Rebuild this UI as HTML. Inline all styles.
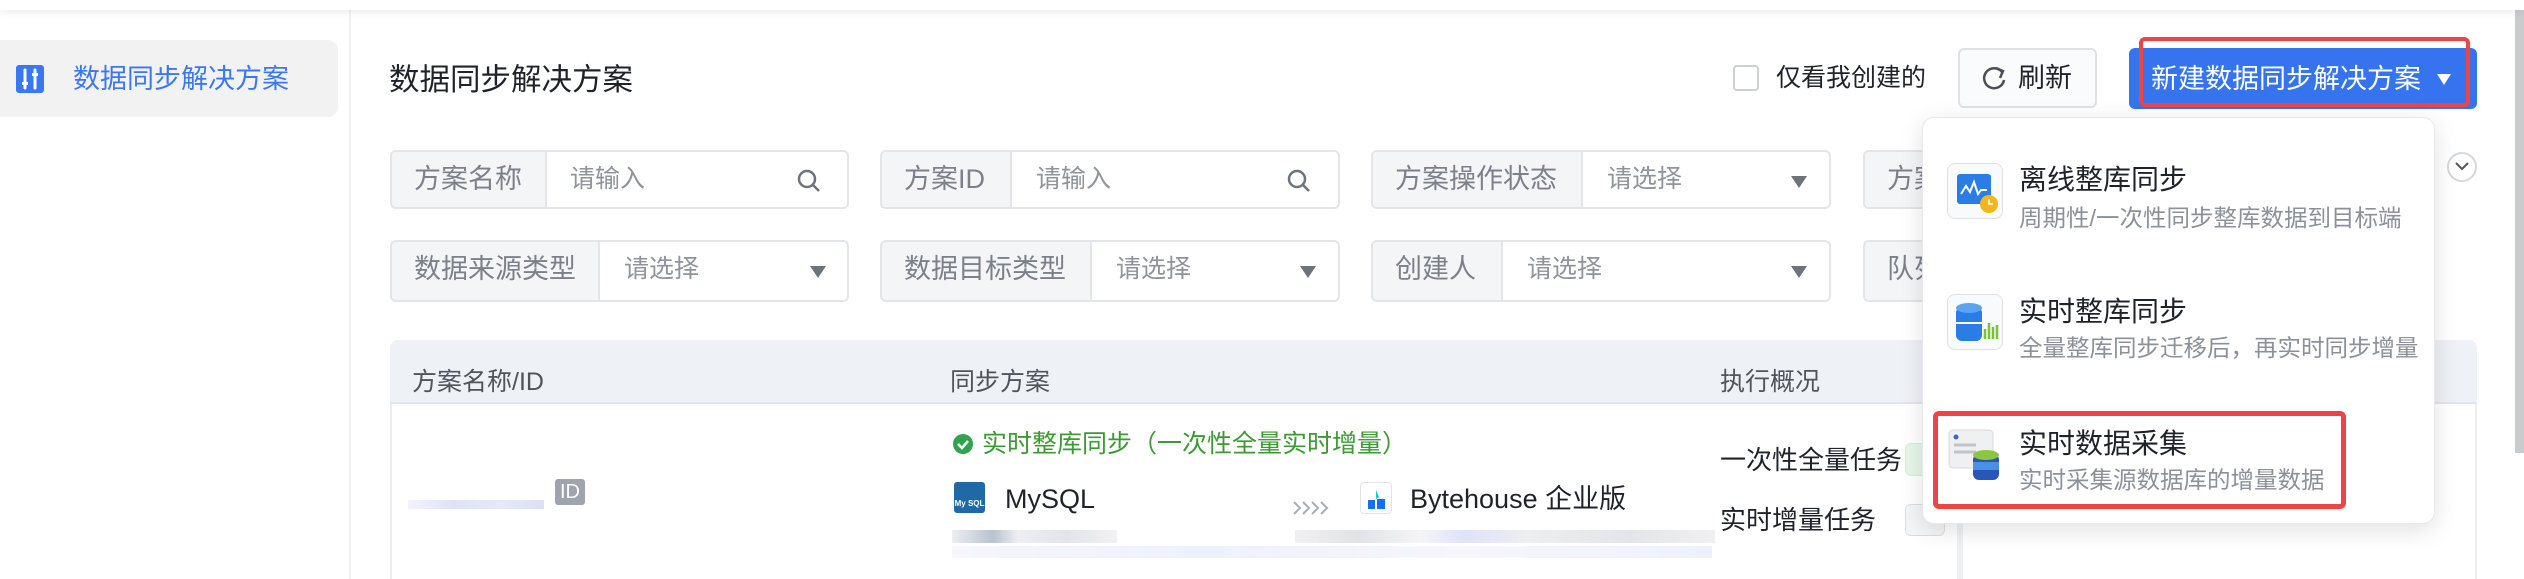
<!DOCTYPE html>
<html><head><meta charset="utf-8"><style>
*{box-sizing:border-box;margin:0;padding:0}
body{width:2524px;height:579px;overflow:hidden;background:#fff;font-family:"Liberation Sans","Noto Sans CJK SC",sans-serif;position:relative;color:#1f2329}
.a{position:absolute;white-space:nowrap}
.topbar{left:0;top:0;width:2524px;height:10px;background:#fff;box-shadow:0 2px 8px rgba(0,0,0,.08);z-index:2}
.side{left:0;top:10px;width:351px;height:569px;border-right:2px solid #eff0f2}
.f{position:absolute;height:59px;border:2px solid #e3e5e9;border-radius:6px;background:#fff;overflow:hidden}
.f .l{position:absolute;left:0;top:0;bottom:0;background:#f4f5f7;border-right:2px solid #e3e5e9;color:#7c8089;font-size:27px;line-height:55px;padding-left:22px}
.f .p{position:absolute;top:0;line-height:55px;font-size:25px;color:#8f939a}
.f .tri{position:absolute;top:24px;width:0;height:0;border-left:8px solid transparent;border-right:8px solid transparent;border-top:12px solid #6e737b}
.th{font-size:25px;color:#50545b;top:362px}
.dd{left:1922px;top:117px;width:513px;height:407px;background:#fff;border:1px solid #e8e9ec;border-radius:12px;box-shadow:0 6px 24px rgba(0,0,0,.12);z-index:5}
.ic{position:absolute;left:24px;width:56px;height:56px;border:1px solid #dfe1e5;border-radius:8px;background:#f9fafb}
.t1{position:absolute;left:96px;font-size:28px;color:#1f2329}
.t2{position:absolute;left:96px;font-size:23.5px;color:#8b9099}
</style></head><body>
<div class="a topbar"></div>
<div class="a side"></div>
<div class="a" style="left:0;top:40px;width:338px;height:77px;background:#f2f2f3;border-radius:0 10px 10px 0"></div>
<svg class="a" style="left:16px;top:65px" width="28" height="28" viewBox="0 0 28 28"><rect width="28" height="28" rx="3" fill="#3a78f2"/><path d="M9 5v18M19 5v18" stroke="#fff" stroke-width="3" stroke-linecap="round"/><rect x="6" y="17" width="6" height="3" fill="#fff"/><rect x="16" y="8" width="6" height="3" fill="#fff"/></svg>
<div class="a" style="left:73px;top:62px;font-size:27px;color:#3a78f2;line-height:34px">数据同步解决方案</div>
<div class="a" style="left:389px;top:61px;font-size:30.5px;color:#1f2329;line-height:38px">数据同步解决方案</div>

<div class="a" style="left:1733px;top:65px;width:26px;height:26px;border:2px solid #ccd0d6;border-radius:4px;background:#fff"></div>
<div class="a" style="left:1776px;top:62px;font-size:25px;line-height:32px;color:#1f2329">仅看我创建的</div>
<div class="a" style="left:1958px;top:48px;width:139px;height:60px;border:2px solid #dfe1e5;border-radius:6px;background:#fafbfc"></div>
<svg class="a" style="left:1980px;top:64px" width="28" height="30" viewBox="0 0 28 30"><path d="M22 8A10 10 0 1 0 24 16" fill="none" stroke="#4a4f57" stroke-width="2.5"/><path d="M16 4l7 3-3 7" fill="none" stroke="#4a4f57" stroke-width="2.5"/></svg>
<div class="a" style="left:2018px;top:61px;font-size:27px;line-height:34px;color:#1f2329">刷新</div>
<div class="a" style="left:2129px;top:48px;width:348px;height:61px;background:#3574ee;border-radius:6px"></div>
<div class="a" style="left:2151px;top:62px;font-size:27px;line-height:34px;color:#fff">新建数据同步解决方案</div>
<div class="a" style="left:2437px;top:74px;border-left:7px solid transparent;border-right:7px solid transparent;border-top:11px solid #fff"></div>
<div class="a" style="left:2139px;top:37px;width:331px;height:70px;border:4px solid #ee4444;border-radius:6px;z-index:3"></div>

<div class="f" style="left:390px;top:150px;width:459px"><div class="l" style="width:155px">方案名称</div><div class="p" style="left:178px">请输入</div>
<svg style="position:absolute;left:404px;top:16px" width="26" height="26" viewBox="0 0 26 26"><circle cx="11" cy="11" r="8" fill="none" stroke="#6e737b" stroke-width="2.5"/><path d="M17 17l6 6" stroke="#6e737b" stroke-width="2.5"/></svg></div>
<div class="f" style="left:880px;top:150px;width:460px"><div class="l" style="width:130px">方案ID</div><div class="p" style="left:154px">请输入</div>
<svg style="position:absolute;left:404px;top:16px" width="26" height="26" viewBox="0 0 26 26"><circle cx="11" cy="11" r="8" fill="none" stroke="#6e737b" stroke-width="2.5"/><path d="M17 17l6 6" stroke="#6e737b" stroke-width="2.5"/></svg></div>
<div class="f" style="left:1371px;top:150px;width:460px"><div class="l" style="width:210px">方案操作状态</div><div class="p" style="left:234px">请选择</div><div class="tri" style="left:418px"></div></div>
<div class="f" style="left:1863px;top:150px;width:460px"><div class="l" style="width:150px">方案状态</div></div>

<div class="f" style="left:390px;top:240px;width:459px;height:62px"><div class="l" style="width:208px">数据来源类型</div><div class="p" style="left:232px">请选择</div><div class="tri" style="left:418px"></div></div>
<div class="f" style="left:880px;top:240px;width:460px;height:62px"><div class="l" style="width:210px">数据目标类型</div><div class="p" style="left:234px">请选择</div><div class="tri" style="left:418px"></div></div>
<div class="f" style="left:1371px;top:240px;width:460px;height:62px"><div class="l" style="width:130px">创建人</div><div class="p" style="left:154px">请选择</div><div class="tri" style="left:418px"></div></div>
<div class="f" style="left:1863px;top:240px;width:460px;height:62px"><div class="l" style="width:150px">队列</div></div>
<div class="a" style="left:2447px;top:152px;width:30px;height:30px;border:2px solid #d6d8dc;border-radius:50%;background:#fff"></div>
<svg class="a" style="left:2454px;top:160px" width="16" height="12"><path d="M2 3l6 6 6-6" fill="none" stroke="#555" stroke-width="2"/></svg>

<div class="a" style="left:390px;top:340px;width:2087px;height:64px;background:#eef1f5;border-radius:8px 8px 0 0;border-bottom:2px solid #e3e6eb"></div>
<div class="a" style="left:390px;top:404px;width:2px;height:175px;background:#eceef1"></div>
<div class="a" style="left:2475px;top:404px;width:2px;height:175px;background:#eceef1"></div>
<div class="a th" style="left:412px">方案名称/ID</div>
<div class="a th" style="left:950px">同步方案</div>
<div class="a th" style="left:1720px">执行概况</div>
<div class="a" style="left:1957px;top:404px;width:6px;height:175px;background:#eef0f2"></div>

<div class="a" style="left:408px;top:500px;width:136px;height:9px;background:linear-gradient(90deg,#f2f3fb,#dfe2f7,#e6e8f8,#dde0f6)"></div>
<div class="a" style="left:555px;top:479px;width:30px;height:26px;background:#9ea3ae;border-radius:3px;color:#fff;font-size:20px;line-height:26px;text-align:center">ID</div>

<svg class="a" style="left:952px;top:433px" width="22" height="22"><circle cx="11" cy="11" r="10" fill="#2ea44f"/><path d="M6 11l4 4 6-7" fill="none" stroke="#fff" stroke-width="2.5"/></svg>
<div class="a" style="left:982px;top:428px;font-size:25px;line-height:32px;color:#3d9a33">实时整库同步（一次性全量实时增量）</div>
<div class="a" style="left:954px;top:482px;width:31px;height:31px;background:#1f6aa6;border-radius:3px;color:#fff;font-size:8px;line-height:44px;text-align:center;font-weight:bold">My SQL</div>
<div class="a" style="left:1005px;top:482px;font-size:27px;line-height:34px">MySQL</div>
<svg class="a" style="left:1292px;top:499px" width="40" height="18" viewBox="0 0 40 18"><path d="M2 3l6 6-6 6M11 3l6 6-6 6M20 3l6 6-6 6M29 3l6 6-6 6" fill="none" stroke="#a8adb4" stroke-width="2"/></svg>
<div class="a" style="left:1360px;top:482px;width:32px;height:32px;border:1px solid #e2e4e8;border-radius:4px;background:#fff"></div>
<svg class="a" style="left:1366px;top:488px" width="22" height="22"><path d="M10 2l3 7-3 2z" fill="#18c6d8"/><rect x="2" y="12" width="7" height="9" fill="#1670f5"/><rect x="11" y="11" width="8" height="10" fill="#1670f5"/></svg>
<div class="a" style="left:1410px;top:482px;font-size:27px;line-height:34px">Bytehouse 企业版</div>
<div class="a" style="left:952px;top:530px;width:165px;height:13px;background:linear-gradient(90deg,#eceef2,#b7c3cf 25%,#eeeff2 40%,#e3e4e8 70%,#f2f2f4)"></div>
<div class="a" style="left:1295px;top:530px;width:420px;height:13px;background:linear-gradient(90deg,#f0f0f2,#e2e3e6 15%,#f5f5f7 30%,#dfe3fa 40%,#eceef0 55%,#e4e5e8 80%,#f0f0f2)"></div>
<div class="a" style="left:952px;top:546px;width:760px;height:12px;background:linear-gradient(90deg,#f6f6fb,#eef0fb,#f7f7fa,#eef0fc)"></div>

<div class="a" style="left:1720px;top:443px;font-size:26px;line-height:34px">一次性全量任务</div>
<div class="a" style="left:1720px;top:503px;font-size:26px;line-height:34px">实时增量任务</div>
<div class="a" style="left:1905px;top:443px;width:40px;height:33px;background:#e5f6e8;border:1px solid #d4eed8;border-radius:6px"></div>
<div class="a" style="left:1905px;top:504px;width:40px;height:32px;background:#f4f5f7;border:1px solid #dcdee2;border-radius:6px"></div>

<div class="a" style="left:2515px;top:0;width:9px;height:453px;background:#c9cbcf"></div>

<div class="a dd">
 <div class="ic" style="top:45px"><svg width="56" height="56" viewBox="0 0 56 56"><rect x="9" y="10" width="34" height="30" rx="3" fill="#2a7de6"/><path d="M13 30l5-8 4 6 4-10 4 12 3-4h6" fill="none" stroke="#fff" stroke-width="2"/><circle cx="41" cy="40" r="9" fill="#f5b51c"/><path d="M41 35v5h4" stroke="#fff" stroke-width="1.6" fill="none"/></svg></div>
 <div class="t1" style="top:40px">离线整库同步</div>
 <div class="t2" style="top:81px">周期性/一次性同步整库数据到目标端</div>
 <div class="ic" style="top:176px"><svg width="56" height="56" viewBox="0 0 56 56"><rect x="8" y="12" width="26" height="34" rx="6" fill="#2a7de6"/><ellipse cx="21" cy="13" rx="13" ry="5" fill="#5aa4f2"/><path d="M8 28h26" stroke="#fff" stroke-width="2"/><path d="M37 34v10M41 28v16M45 32v12M49 30v14" stroke="#7bc23a" stroke-width="2.5"/></svg></div>
 <div class="t1" style="top:172px">实时整库同步</div>
 <div class="t2" style="top:211px">全量整库同步迁移后，再实时同步增量</div>
 <div class="ic" style="top:310px;border:none;background:none"><svg width="56" height="56" viewBox="0 0 56 56"><rect x="2" y="2" width="44" height="38" rx="4" fill="#eef0f2" stroke="#d5d8dc"/><circle cx="9" cy="9" r="2.5" fill="#3a66c9"/><path d="M7 17h22M7 24h22" stroke="#c0c4ca" stroke-width="3"/><rect x="26" y="26" width="26" height="26" rx="6" fill="#2857b6"/><rect x="26" y="34" width="26" height="8" fill="#4a90e6"/><ellipse cx="39" cy="27" rx="13" ry="5" fill="#8cc744"/></svg></div>
 <div class="t1" style="top:304px">实时数据采集</div>
 <div class="t2" style="top:343px">实时采集源数据库的增量数据</div>
 <div style="position:absolute;left:10px;top:293px;width:413px;height:98px;border:5px solid #ee4444;border-radius:6px"></div>
</div>
</body></html>
